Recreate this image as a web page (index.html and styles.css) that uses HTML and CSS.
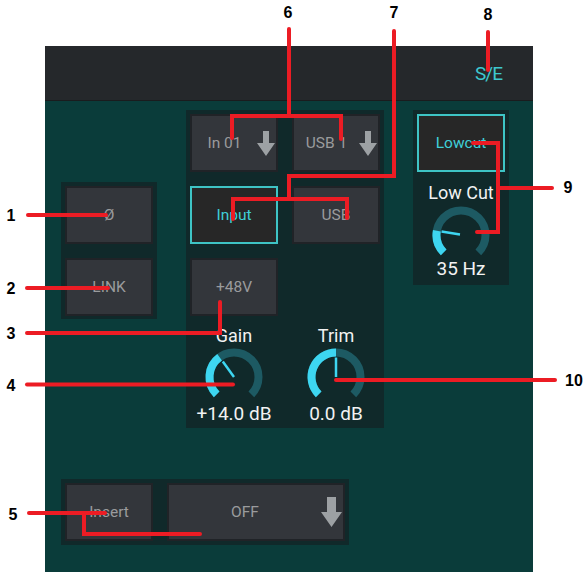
FILE: index.html
```html
<!DOCTYPE html>
<html lang="en">
<head>
<meta charset="utf-8">
<title>Channel input panel</title>
<link rel="stylesheet" href="styles.css">
</head>
<body>
<div class="panel">
  <div class="header"><span class="se">S/E</span></div>
  <div class="body">
    <div class="top-row">
      <div class="group left-group">
        <div class="btn">Ø</div>
        <div class="btn">LINK</div>
      </div>
      <div class="group input-group">
        <div class="btn btn-drop"><span class="btn-label">In 01</span>
          <svg class="arrow" viewBox="0 0 18 25" width="18" height="25"><path d="M6 0H12V12H18L9 25L0 12H6Z"/></svg>
        </div>
        <div class="btn btn-drop"><span class="btn-label">USB 1</span>
          <svg class="arrow" viewBox="0 0 18 25" width="18" height="25"><path d="M6 0H12V12H18L9 25L0 12H6Z"/></svg>
        </div>
        <div class="btn btn-active">Input</div>
        <div class="btn">USB</div>
        <div class="btn">+48V</div>
        <div class="spacer"></div>
        <div class="knob">
          <div class="knob-label">Gain</div>
          <svg class="knob-dial" viewBox="0 0 60 60" width="60" height="60">
            <path class="track" d="M12.68 47.32A24.5 24.5 0 1 1 47.32 47.32"/>
            <path class="fill" d="M12.68 47.32A24.5 24.5 0 0 1 15.6 10.18"/>
            <line class="pointer" x1="30" y1="30" x2="18.8" y2="14.6"/>
          </svg>
          <div class="knob-value">+14.0 dB</div>
        </div>
        <div class="knob">
          <div class="knob-label">Trim</div>
          <svg class="knob-dial" viewBox="0 0 60 60" width="60" height="60">
            <path class="track" d="M12.68 47.32A24.5 24.5 0 1 1 47.32 47.32"/>
            <path class="fill" d="M12.68 47.32A24.5 24.5 0 0 1 30 5.5"/>
            <line class="pointer" x1="30" y1="30" x2="30" y2="10.5"/>
          </svg>
          <div class="knob-value">0.0 dB</div>
        </div>
      </div>
      <div class="group right-group">
        <div class="btn btn-active">Lowcut</div>
        <div class="knob knob-lowcut">
          <div class="knob-label">Low Cut</div>
          <svg class="knob-dial" viewBox="0 0 60 60" width="60" height="60">
            <path class="track" d="M12.68 47.32A24.5 24.5 0 1 1 47.32 47.32"/>
            <path class="fill" d="M12.68 47.32A24.5 24.5 0 0 1 5.87 25.75"/>
            <line class="pointer" x1="29" y1="29.6" x2="10.5" y2="26.6"/>
          </svg>
          <div class="knob-value">35 Hz</div>
        </div>
      </div>
    </div>
    <div class="group bottom-group">
      <div class="btn">Insert</div>
      <div class="btn btn-drop btn-wide"><span class="btn-label">OFF</span>
        <svg class="arrow" viewBox="0 0 21 30" width="21" height="30"><path d="M6 0H15V15H21L10.5 30L0 15H6Z"/></svg>
      </div>
    </div>
  </div>
</div>

<svg class="annotations" viewBox="0 0 588 580" width="588" height="580">
  <g class="marks">
    <path d="M28 215H106"/>
    <path d="M27 288H108"/>
    <path d="M27 333H220V302"/>
    <path d="M27 384.5H233"/>
    <path d="M29 513H105"/>
    <path d="M84 513V534H200"/>
    <path d="M289 29V116"/>
    <path d="M232 138V116H341V139"/>
    <path d="M394 31V176H289V199"/>
    <path d="M233 219V199H347V218"/>
    <path d="M488 32V70"/>
    <path d="M552 188H498"/>
    <path d="M473 143H498V232H477"/>
    <path d="M336 380H555"/>
  </g>
  <g class="nums">
    <text x="11" y="221">1</text>
    <text x="11" y="294">2</text>
    <text x="11" y="339">3</text>
    <text x="11" y="391">4</text>
    <text x="13" y="520">5</text>
    <text x="288" y="18">6</text>
    <text x="394" y="18">7</text>
    <text x="488" y="20">8</text>
    <text x="568" y="193">9</text>
    <text x="574" y="386">10</text>
  </g>
</svg>
</body>
</html>
```
FILE: styles.css
```css
html, body {
  margin: 0;
  padding: 0;
  background: #ffffff;
}

body {
  position: relative;
  width: 588px;
  height: 580px;
  overflow: hidden;
  font-family: Roboto, "Liberation Sans", sans-serif;
}

.panel {
  margin: 46px 0 0 45px;
  width: 488px;
  height: 526px;
  display: flex;
  flex-direction: column;
}

.header {
  height: 54px;
  flex: none;
  background: #25282b;
  border-bottom: 1px solid #1a1c1e;
  display: flex;
  justify-content: flex-end;
  align-items: center;
  padding-right: 31px;
}

.se {
  color: #3ec7ce;
  font-size: 19px;
  letter-spacing: -1px;
}

.body {
  flex: 1;
  background: #0a3c3a;
  padding: 9px 0 0 16px;
}

.top-row {
  display: flex;
  align-items: flex-start;
  gap: 29px;
}

.group {
  background: #10292a;
  padding: 4px;
}

.left-group {
  margin-top: 72px;
  display: flex;
  flex-direction: column;
  gap: 14px;
  padding: 4px 4px 3px;
}

.input-group {
  display: grid;
  grid-template-columns: 88px 88px;
  grid-auto-rows: auto;
  gap: 14px;
  padding: 4px 4px 7px;
}

.right-group {
  display: flex;
  flex-direction: column;
  padding: 4px 4px 9px;
}

.bottom-group {
  margin-top: 51px;
  width: max-content;
  display: flex;
  gap: 14px;
}

.btn {
  box-sizing: border-box;
  width: 88px;
  height: 58px;
  background: #33363b;
  border: 2px solid #202327;
  color: #9a9b9d;
  font-size: 15.5px;
  display: flex;
  align-items: center;
  justify-content: center;
}

.btn-wide {
  width: 178px;
}

.btn-drop {
  justify-content: flex-start;
  padding-right: 1px;
}

.btn-label {
  flex: 1;
  text-align: center;
}

.arrow {
  flex: none;
  display: block;
  fill: #9da1a4;
}

.btn-active {
  background: #272727;
  border-color: #3ec4c5;
  color: #3fd0d8;
}

.spacer {
  height: 58px;
}

.knob {
  display: flex;
  flex-direction: column;
  align-items: center;
  color: #f2f2f2;
}

.knob-label {
  font-size: 18px;
  line-height: 12px;
  height: 12px;
}

.knob-dial {
  display: block;
  margin-top: 5px;
}

.knob-value {
  font-size: 19px;
  line-height: 14px;
  height: 14px;
}

.knob-lowcut .knob-label {
  margin-top: 15px;
}

.knob-lowcut .knob-dial {
  margin-top: 6px;
}

.knob-lowcut .knob-value {
  margin-top: -3px;
}

.track {
  fill: none;
  stroke: #1d5a63;
  stroke-width: 8;
}

.fill {
  fill: none;
  stroke: #3dd6f1;
  stroke-width: 8;
}

.pointer {
  stroke: #3dd6f1;
  stroke-width: 2.5;
}

.annotations {
  position: absolute;
  top: 0;
  left: 0;
  pointer-events: none;
}

.marks path {
  fill: none;
  stroke: #ec1c24;
  stroke-width: 4;
  stroke-linecap: round;
  stroke-linejoin: miter;
}

.nums text {
  font-family: "Liberation Sans", Arial, sans-serif;
  font-weight: bold;
  font-size: 16px;
  fill: #000000;
  text-anchor: middle;
}
```
